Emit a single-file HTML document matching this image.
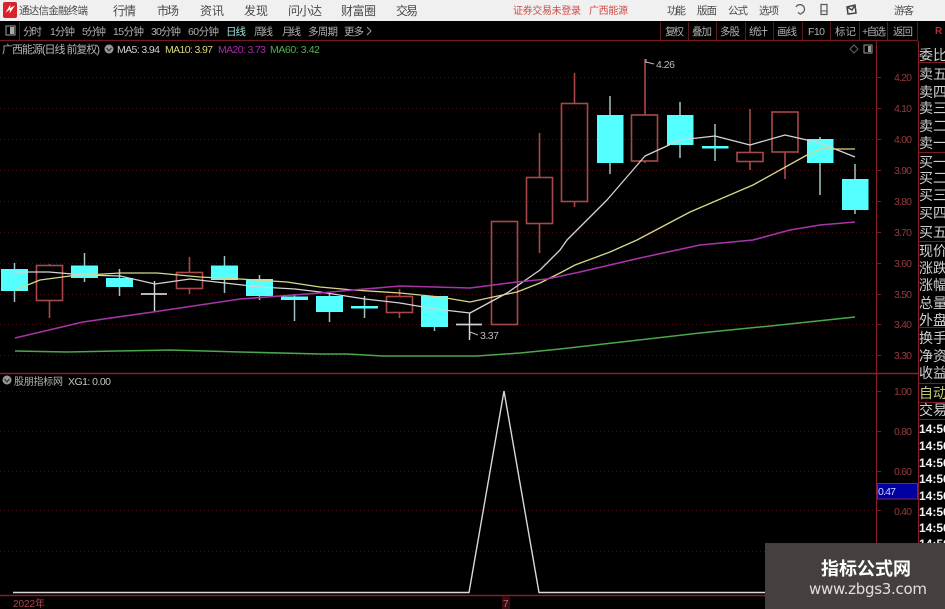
<!DOCTYPE html>
<html><head><meta charset="utf-8"><style>
html,body{margin:0;padding:0;background:#000;width:945px;height:609px;overflow:hidden}
svg{display:block;filter:blur(0.35px)}
text{font-family:"Liberation Sans","Noto Sans CJK SC",sans-serif}
.m{font-size:12px;fill:#4a4a4a}
.r{font-size:10.5px;fill:#4a4a4a}
.t{font-size:10.5px;fill:#b0b0b0}
.a{font-size:10.5px;fill:#943a3e}
.s{font-size:14px;fill:#cfcfcf}
.k{font-size:12px;font-weight:bold;fill:#f4f4f4}
.c{fill:#54ffff}
.g{stroke:#4a0e12;stroke-width:1;stroke-dasharray:1 3}
</style></head><body>
<svg width="945" height="609" viewBox="0 0 945 609" xmlns="http://www.w3.org/2000/svg">
<rect width="945" height="609" fill="#000"/>
<rect width="945" height="21" fill="#f0f0f0"/>
<rect x="3" y="2" width="14" height="16" rx="2" fill="#d8232a"/>
<path d="M5.5 12.5 L10 9.5 L9.5 13.5 L15 5.5 L10 8 L10.5 4.5 Z" fill="#fff"/>
<text class="r" x="19" y="14" textLength="69">通达信金融终端</text>
<g class="m">
<text x="113" y="15" textLength="23">行情</text><text x="157" y="15" textLength="22">市场</text><text x="200" y="15" textLength="24">资讯</text><text x="244" y="15" textLength="24">发现</text><text x="288" y="15" textLength="34">问小达</text><text x="341" y="15" textLength="35">财富圈</text><text x="396" y="15" textLength="22">交易</text>
</g>
<text x="513" y="14" font-size="10" style="fill:#d04a4a" textLength="68">证券交易未登录</text>
<text x="589" y="14" font-size="10" style="fill:#d04a4a" textLength="39">广西能源</text>
<g class="r">
<text x="667" y="14" textLength="19">功能</text><text x="697" y="14" textLength="20">版面</text><text x="728" y="14" textLength="20">公式</text><text x="759" y="14" textLength="20">选项</text><text x="894" y="14" textLength="20">游客</text>
</g>
<path d="M796 7 A4.5 4.5 0 1 1 801 13.5 M798 12.5 L801 14.5" fill="none" stroke="#555" stroke-width="1.2"/>
<rect x="821" y="4.5" width="6" height="10" fill="none" stroke="#555" stroke-width="1.2"/><path d="M821 11H827" stroke="#555"/>
<path d="M847 7 L855 5 L856 13 L848 14 Z M847 7 L852 10 L855 5" fill="none" stroke="#444" stroke-width="1.5"/>

<!-- toolbar -->
<rect x="6" y="26" width="9" height="9" fill="none" stroke="#888" stroke-width="1.2"/><rect x="10" y="27" width="4" height="7" fill="#aaa"/>
<path d="M19.5 22V40" stroke="#5a1a1e"/>
<g class="t">
<text x="23" y="35" textLength="19">分时</text><text x="50" y="35" textLength="25">1分钟</text><text x="82" y="35" textLength="24">5分钟</text><text x="113" y="35" textLength="31">15分钟</text><text x="151" y="35" textLength="30">30分钟</text><text x="188" y="35" textLength="31">60分钟</text>
<text x="226" y="35" textLength="20" style="fill:#9fe0e0">日线</text>
<text x="254" y="35" textLength="19">周线</text><text x="282" y="35" textLength="19">月线</text><text x="308" y="35" textLength="30">多周期</text><text x="344" y="35" textLength="20">更多</text>
<text x="665" y="35" textLength="19">复权</text><text x="692" y="35" textLength="20">叠加</text><text x="720" y="35" textLength="20">多股</text><text x="749" y="35" textLength="19">统计</text><text x="777" y="35" textLength="20">画线</text><text x="808" y="35" textLength="17">F10</text><text x="835" y="35" textLength="21">标记</text><text x="862" y="35" textLength="24">+自选</text><text x="893" y="35" textLength="20">返回</text>
</g>
<path d="M367 27L371 31L367 35" fill="none" stroke="#999"/>
<text x="935" y="34" font-size="10" font-weight="bold" style="fill:#b03030">R</text>
<path d="M660.5 22V40M688.5 22V40M716.5 22V40M745.5 22V40M773.5 22V40M802.5 22V40M830.5 22V40M859.5 22V40M887.5 22V40M917.5 22V41" stroke="#5a1a1e"/>
<path d="M0 40.5H918" stroke="#761a22" stroke-width="1.2"/>

<!-- info line -->
<text x="2" y="53" font-size="11" style="fill:#b4b4b4" textLength="98">广西能源(日线 前复权)</text>
<circle cx="109" cy="49" r="4.5" fill="#999"/><path d="M106.5 48L109 51L111.5 48" fill="none" stroke="#222"/>
<text x="117" y="53" font-size="10.5" style="fill:#d0d0d0" textLength="43">MA5: 3.94</text>
<text x="165" y="53" font-size="10.5" style="fill:#d8d87c" textLength="48">MA10: 3.97</text>
<text x="218" y="53" font-size="10.5" style="fill:#a828a8" textLength="48">MA20: 3.73</text>
<text x="270" y="53" font-size="10.5" style="fill:#50b050" textLength="50">MA60: 3.42</text>
<path d="M854 45L858 49L854 53L850 49Z" fill="none" stroke="#666"/>
<rect x="864" y="45" width="8" height="8" fill="none" stroke="#999"/><rect x="868" y="46" width="3" height="6" fill="#999"/>

<!-- grid -->
<g class="g">
<path d="M0 77.5H876M0 108.5H876M0 139.5H876M0 170.5H876M0 201.5H876M0 232.5H876M0 263.5H876M0 294.5H876M0 324.5H876M0 355.5H876"/>
<path d="M0 431.5H876M0 471.5H876M0 510.5H876M0 551.5H876M0 391.5H876"/>
</g>
<!-- axes -->
<path d="M876.5 41V595" stroke="#8a1c28" stroke-width="1.2"/>
<path d="M918.5 41V543" stroke="#8a1c28" stroke-width="1.2"/>
<path d="M0 373.5H918" stroke="#8a2020" stroke-width="1.4"/>
<path d="M876 77.5h5M876 108.5h5M876 139.5h5M876 170.5h5M876 201.5h5M876 232.5h5M876 263.5h5M876 294.5h5M876 324.5h5M876 355.5h5M876 391.5h5M876 431.5h5M876 471.5h5M876 510.5h5" stroke="#7a1c24"/>
<path d="M918 62.5H945M918 152.5H945M918 241.5H945M918 327.5H945M918 383.5H945M918 402.5H945M918 419.5H945" stroke="#7a1c24"/>
<path d="M0 595.5H765" stroke="#8a1c28" stroke-width="1.6"/>
<rect x="502" y="596" width="8" height="13" fill="#3a0c12"/>

<g class="a">
<text x="894" y="81" textLength="18">4.20</text><text x="894" y="112" textLength="18">4.10</text><text x="894" y="143" textLength="18">4.00</text><text x="894" y="174" textLength="18">3.90</text><text x="894" y="205" textLength="18">3.80</text><text x="894" y="236" textLength="18">3.70</text><text x="894" y="267" textLength="18">3.60</text><text x="894" y="298" textLength="18">3.50</text><text x="894" y="328" textLength="18">3.40</text><text x="894" y="359" textLength="18">3.30</text>
<text x="894" y="395" textLength="18">1.00</text><text x="894" y="435" textLength="18">0.80</text><text x="894" y="475" textLength="18">0.60</text><text x="894" y="515" textLength="18">0.40</text>
</g>

<!-- red candles -->
<g fill="none" stroke="#a84848" stroke-width="1.6">
<rect x="36.5" y="265.5" width="26" height="35"/><path d="M49.5 264V265M49.5 301V318"/>
<rect x="176.5" y="272.5" width="26" height="16"/><path d="M189.5 257V272M189.5 289V294"/>
<rect x="386.5" y="296.5" width="26" height="16"/><path d="M399.5 289V296M399.5 313V318"/>
<rect x="491.5" y="221.5" width="26" height="103"/>
<rect x="526.5" y="177.5" width="26" height="46"/><path d="M539.5 133V177M539.5 224V253"/>
<rect x="561.5" y="103.5" width="26" height="98"/><path d="M574.5 73V103M574.5 202V207"/>
<rect x="631.5" y="115" width="26" height="46"/><path d="M645 59V115M645 161V163"/>
<rect x="737" y="152.5" width="26" height="9"/><path d="M750 109V152M750 162V170"/>
<rect x="772" y="112" width="26" height="40"/><path d="M785 152V179"/>
</g>
<!-- cyan wicks -->
<path d="M14.5 263V302M84.5 253V282M119.5 269V296M259.5 275V300M224.5 256V293M294.5 294V321M329.5 294V322M364.5 296V318M434.5 327V331M610 96V174M680 102V158M715 124V161M820 137V195M855 164V214" stroke="#a0c4c4" stroke-width="1.5" fill="none"/>
<path d="M154.5 281V312M469.5 313V340" stroke="#d8d8d8" stroke-width="1.4"/>
<path d="M141 294H167M456 324.5H482" stroke="#d0d0d0" stroke-width="1.8"/>
<g class="c">
<rect x="1" y="269" width="27" height="22"/>
<rect x="71" y="265.5" width="27" height="12.5"/>
<rect x="106" y="278" width="27" height="9"/>
<rect x="211" y="265.5" width="27" height="14.5"/>
<rect x="246" y="279" width="27" height="17"/>
<rect x="281" y="296.5" width="27" height="3.5"/>
<rect x="316" y="296" width="27" height="16"/>
<rect x="351" y="306" width="27" height="2.5"/>
<rect x="421" y="296" width="27" height="31"/>
<rect x="597" y="115" width="26.5" height="48"/>
<rect x="667" y="115" width="26.5" height="30"/>
<rect x="702" y="146" width="26.5" height="2.5"/>
<rect x="807" y="139" width="26.5" height="24"/>
<rect x="842" y="179" width="26.5" height="31"/>
</g>

<!-- MA lines -->
<g fill="none" stroke-width="1.3" stroke-linejoin="round">
<polyline stroke="#d4d4d4" points="14,272 49,272 84,275 120,276 155,284 190,279 225,283 260,287 295,289 320,292 365,299 400,303 435,309 470,313 507,293 540,270 560,250 567,240 607,200 645,156 680,140 715,136 750,145 785,135 820,143 855,157"/>
<polyline stroke="#d8d88a" points="15,290 40,280 70,276 120,273 157,273 200,277 240,279 287,282 320,287 353,290 400,293 440,297 470,302 493,297 517,292 540,283 560,273 575,265 610,252 637,240 690,212 753,185 807,155 820,149 855,149"/>
<polyline stroke="#a834a8" stroke-width="1.6" points="15,338 83,322 153,312 240,299 320,293 353,290 400,286 470,288 517,282 547,279 580,272 640,258 700,245 753,240 790,230 820,225 855,222"/>
<polyline stroke="#4aa84a" stroke-width="1.5" points="15,351 67,352 170,350 240,352 320,354 347,354 383,356 477,356 520,353 560,349 630,341 700,333 780,325 855,317"/>
</g>

<!-- hi/lo labels -->
<path d="M646 62L654 64M646 59V63M470 332L478 335M470 332V336" fill="none" stroke="#bbb"/>
<text x="656" y="68" font-size="10.5" style="fill:#bcbcbc" textLength="19">4.26</text>
<text x="480" y="339" font-size="10.5" style="fill:#bcbcbc" textLength="19">3.37</text>

<!-- indicator -->
<circle cx="7" cy="380" r="4.5" fill="#999"/><path d="M4.5 379L7 382L9.5 379" fill="none" stroke="#222"/>
<text x="14" y="385" font-size="10" style="fill:#b4b4b4" textLength="49">股朋指标网</text>
<text x="68" y="385" font-size="10.5" style="fill:#c4c4c4" textLength="43">XG1: 0.00</text>
<polyline fill="none" stroke="#d8d8d8" stroke-width="1.4" points="13,592.5 469,592.5 504,391 539,592.5 765,592.5"/>
<text x="13" y="607" font-size="10" style="fill:#b04450" textLength="32">2022年</text>
<text x="503" y="607" font-size="10" style="fill:#c06a70">7</text>

<!-- value box -->
<rect x="877.5" y="483.5" width="40" height="15.5" fill="#0000a0" stroke="#802060"/>
<text x="878" y="495" font-size="10.5" style="fill:#cfd8ff" textLength="18">0.47</text>

<!-- right column -->
<g class="s">
<text x="919" y="60">委比</text>
<text x="919" y="79">卖五</text><text x="919" y="97">卖四</text><text x="919" y="113">卖三</text><text x="919" y="131">卖二</text><text x="919" y="148">卖一</text>
<text x="919" y="167">买一</text><text x="919" y="183">买二</text><text x="919" y="200">买三</text><text x="919" y="218">买四</text><text x="919" y="237">买五</text>
<text x="919" y="256">现价</text><text x="919" y="273">涨跌</text><text x="919" y="290">涨幅</text><text x="919" y="308">总量</text><text x="919" y="325">外盘</text>
<text x="919" y="343">换手</text><text x="919" y="361">净资</text><text x="919" y="378">收益</text>
<text x="919" y="398" style="fill:#c8c878">自动</text><text x="919" y="415">交易</text>
</g>
<g class="k">
<text x="919" y="433">14:56</text><text x="919" y="450">14:56</text><text x="919" y="467">14:56</text><text x="919" y="483">14:56</text><text x="919" y="500">14:56</text><text x="919" y="516">14:56</text><text x="919" y="532">14:56</text><text x="919" y="548">14:56</text>
</g>

<!-- watermark -->
<rect x="765" y="543" width="180" height="66" fill="#453f3e"/>
<text x="821" y="575" font-size="18" font-weight="bold" style="fill:#fff" textLength="90">指标公式网</text>
<text x="809" y="594" font-size="15" style="font-family:'DejaVu Sans',sans-serif;fill:#e0e0e0" textLength="118">www.zbgs3.com</text>
</svg>
</body></html>
